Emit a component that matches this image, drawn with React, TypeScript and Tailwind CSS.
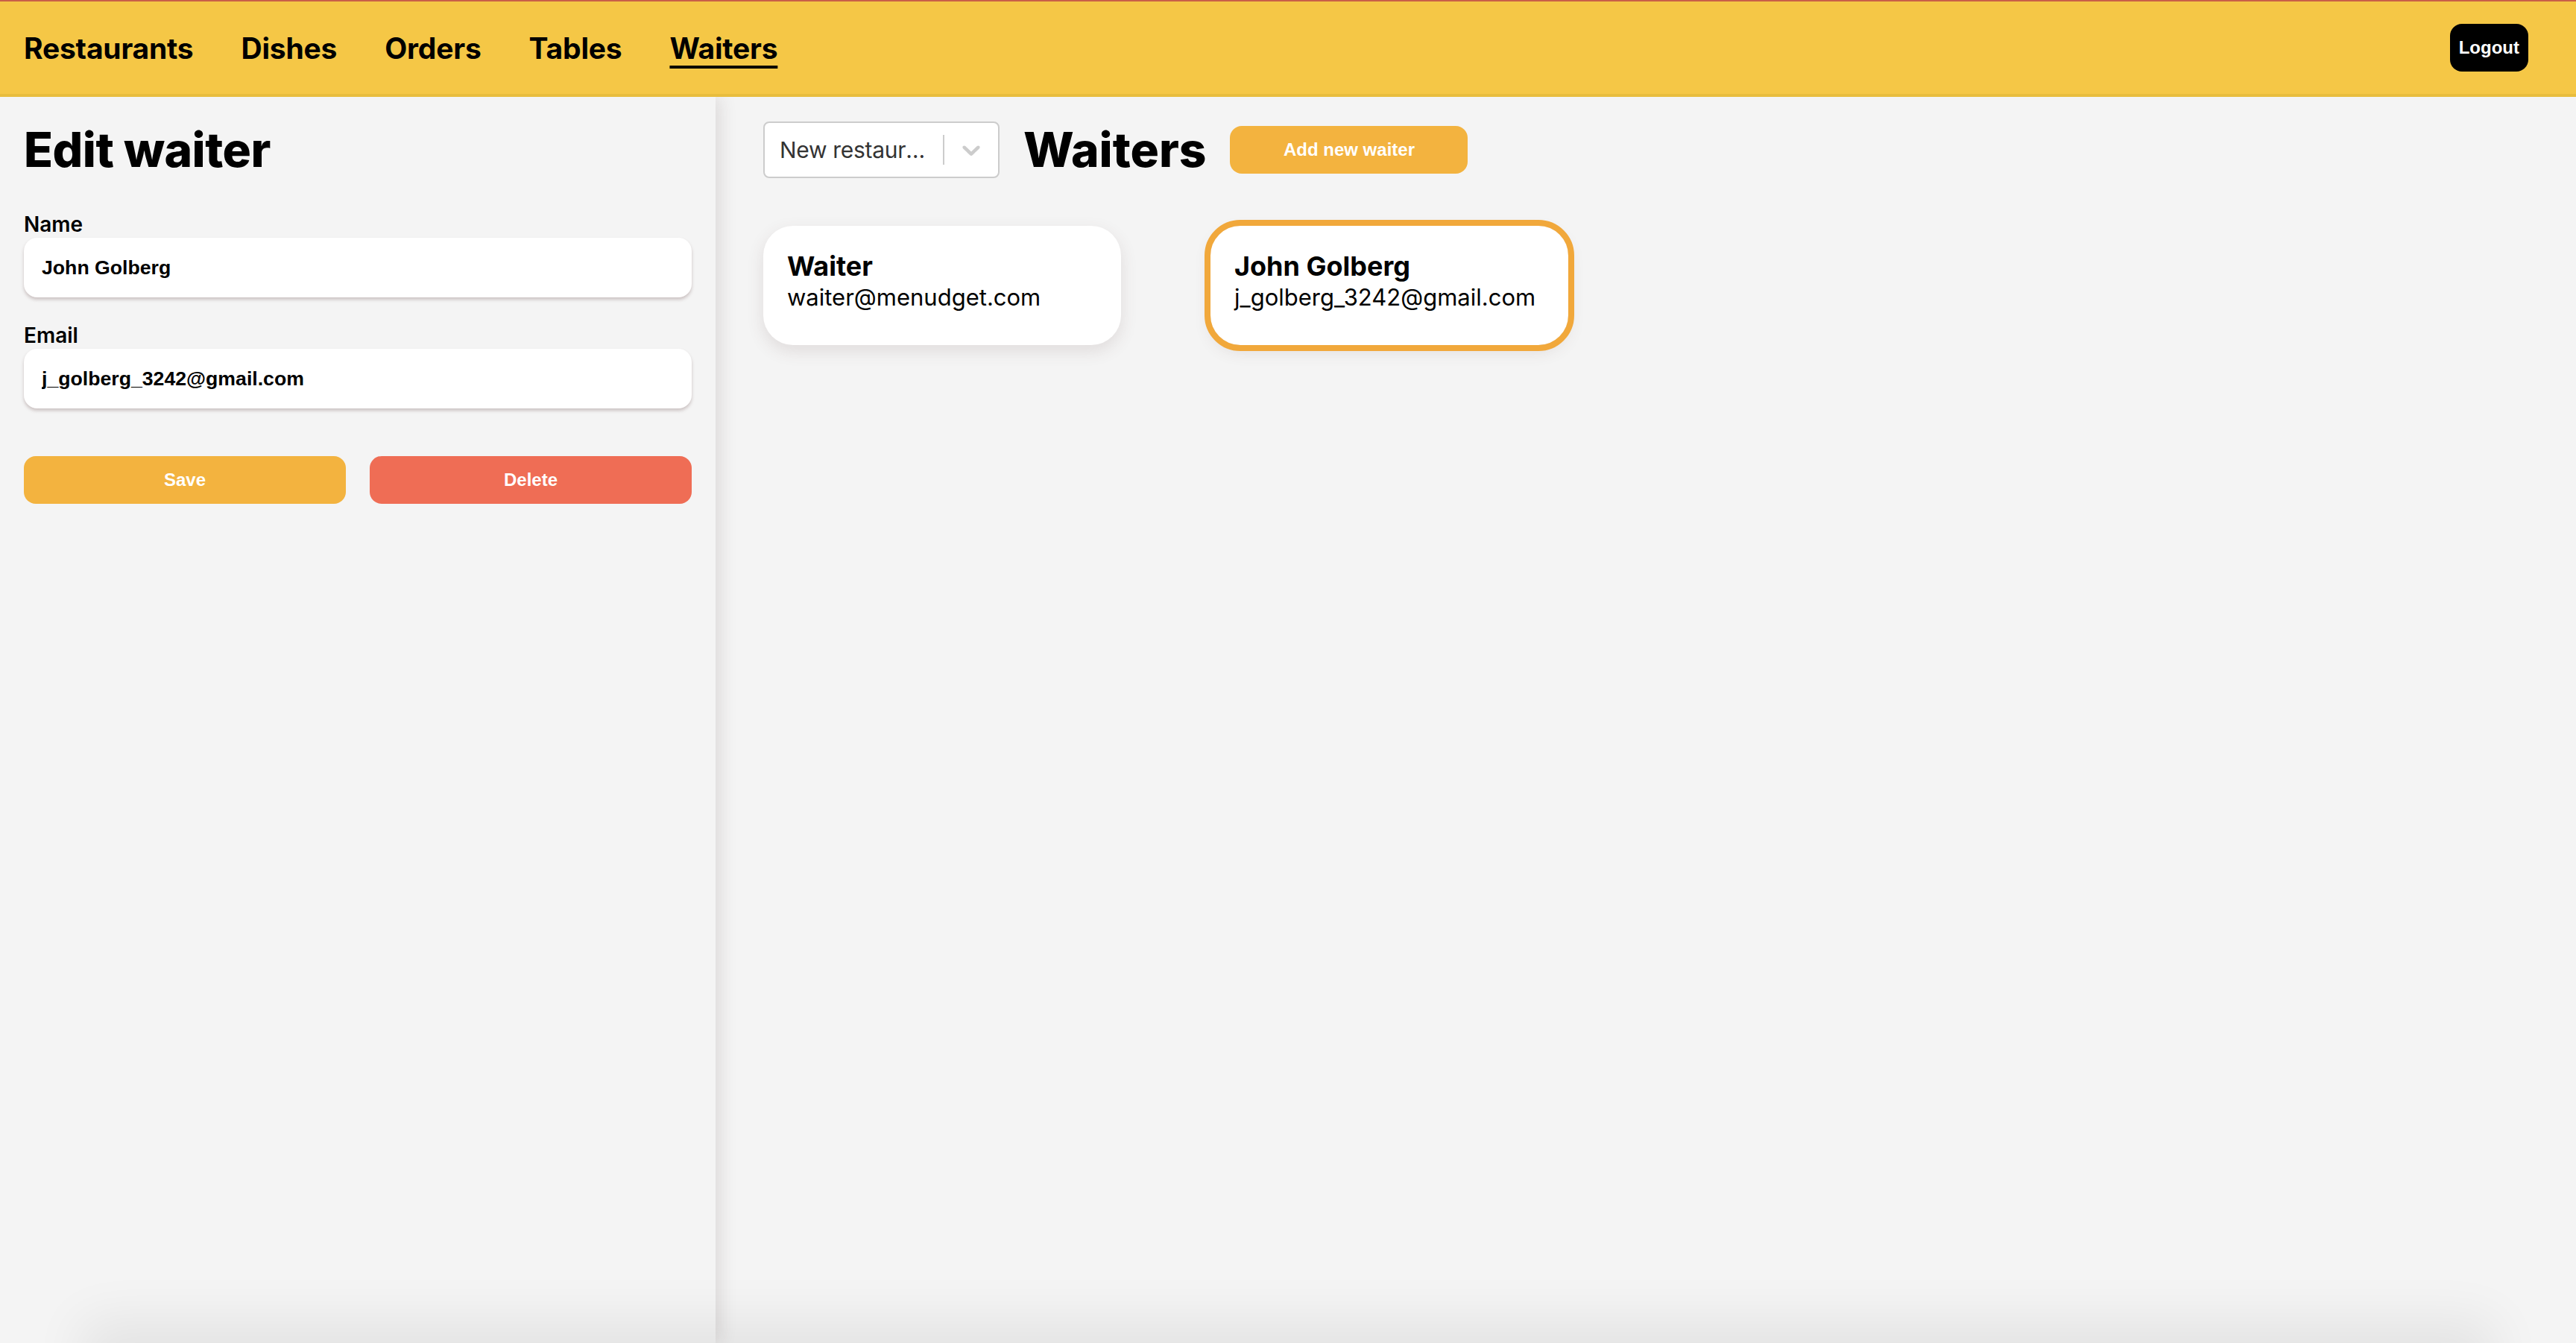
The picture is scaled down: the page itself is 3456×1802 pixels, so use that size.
import React from "react";

const navItems = ["Restaurants", "Dishes", "Orders", "Tables", "Waiters"];

const waiters = [
  { name: "Waiter", email: "waiter@menudget.com", selected: false },
  { name: "John Golberg", email: "j_golberg_3242@gmail.com", selected: true },
];

const sans = "font-['Inter',sans-serif]";
const sys = "font-['Liberation_Sans',Arial,sans-serif]";

function Header() {
  return (
    <header className="h-[130px] bg-[#f5c746] border-t-2 border-t-[#c95f48] border-b-4 border-b-[#e8bd3d] flex items-center justify-between pl-8 pr-16">
      <nav className={`flex items-center gap-[64px] ${sans}`}>
        {navItems.map((item) => (
          <a
            key={item}
            href="#"
            className={
              "text-[39px] font-bold tracking-[-0.2px] text-black leading-none " +
              (item === "Waiters" ? "underline decoration-[4px] underline-offset-[9px]" : "")
            }
          >
            {item}
          </a>
        ))}
      </nav>
      <button className={`h-16 px-3 rounded-2xl bg-black text-white text-[24px] leading-none font-bold ${sys}`}>
        Logout
      </button>
    </header>
  );
}

function Field({ label, value, className }: { label: string; value: string; className?: string }) {
  return (
    <div className={className}>
      <label className={`block text-[28px] leading-[1.21] font-semibold text-black ${sans}`}>{label}</label>
      <input
        defaultValue={value}
        className={`w-full h-[80px] rounded-[18px] bg-white px-6 text-[26.67px] font-bold text-black outline-none shadow-[0_3px_4px_rgba(110,80,80,0.3)] ${sys}`}
      />
    </div>
  );
}

function EditPanel() {
  return (
    <aside className="relative z-10 w-[960px] shrink-0 bg-[#f4f4f4] px-8 pt-8 shadow-[6px_0_22px_rgba(60,30,30,0.12)]">
      <h1 className={`text-[64px] leading-[1.21] font-extrabold tracking-[-0.5px] text-black ${sans}`}>Edit waiter</h1>
      <Field label="Name" value="John Golberg" className="mt-[46px]" />
      <Field label="Email" value="j_golberg_3242@gmail.com" className="mt-[35px]" />
      <div className={`mt-16 grid grid-cols-2 gap-8 ${sys}`}>
        <button className="h-16 rounded-2xl bg-[#f3b33f] text-white text-[24px] leading-none font-bold">Save</button>
        <button className="h-16 rounded-2xl bg-[#ef6d55] text-white text-[24px] leading-none font-bold">Delete</button>
      </div>
    </aside>
  );
}

function RestaurantSelect() {
  return (
    <div className={`flex h-[76px] w-[317px] items-center rounded-lg border-2 border-[#cccccc] bg-white ${sans}`}>
      <div className="flex-1 min-w-0 px-4">
        <div className="mx-1 truncate text-[30px] leading-[1.21] tracking-[-0.3px] text-[#333333]">New restaurant</div>
      </div>
      <span className="w-[2px] self-stretch my-4 bg-[#cccccc]" />
      <div className="p-4">
        <svg width="40" height="40" viewBox="0 0 20 20" fill="#cccccc">
          <path d="M4.516 7.548c0.436-0.446 1.043-0.481 1.576 0l3.908 3.747 3.908-3.747c0.533-0.481 1.141-0.446 1.574 0 0.436 0.445 0.408 1.197 0 1.615-0.406 0.418-4.695 4.502-4.695 4.502-0.217 0.223-0.502 0.335-0.787 0.335s-0.57-0.112-0.789-0.335c0 0-4.287-4.084-4.695-4.502s-0.436-1.170 0-1.615z" />
        </svg>
      </div>
    </div>
  );
}

function WaiterCard({ name, email, selected }: { name: string; email: string; selected: boolean }) {
  return (
    <div
      className={
        "w-[480px] h-[160px] rounded-[40px] bg-white px-8 pt-[33px] shadow-[0_8px_22px_rgba(90,60,60,0.13)] " +
        sans +
        (selected ? " outline-8 outline-[#f1a83b]" : "")
      }
    >
      <div className="text-[36px] font-bold text-black leading-[1.21]">{name}</div>
      <div className="text-[31px] text-black leading-[1.21]">{email}</div>
    </div>
  );
}

function WaitersPanel() {
  return (
    <section className="flex-1 bg-[#f4f4f4] pl-16 pt-8">
      <div className="flex items-center gap-8">
        <RestaurantSelect />
        <h2 className={`text-[64px] leading-[1.21] font-extrabold text-black ${sans}`}>Waiters</h2>
        <button className={`h-16 w-[319px] rounded-2xl bg-[#f3b33f] text-white text-[24px] leading-none font-bold ${sys}`}>
          Add new waiter
        </button>
      </div>
      <div className="mt-16 flex flex-wrap gap-[120px]">
        {waiters.map((w) => (
          <WaiterCard key={w.email} {...w} />
        ))}
      </div>
    </section>
  );
}

export default function App() {
  return (
    <div className="min-h-screen bg-[#f4f4f4]">
      <Header />
      <main className="relative flex h-[1672px] overflow-hidden">
        <EditPanel />
        <WaitersPanel />
        {/* soft shadow creeping in from below the fold */}
        <div className="pointer-events-none absolute left-[140px] right-[140px] top-full h-10 z-20 shadow-[0_0_70px_30px_rgba(0,0,0,0.07)]" />
      </main>
    </div>
  );
}
